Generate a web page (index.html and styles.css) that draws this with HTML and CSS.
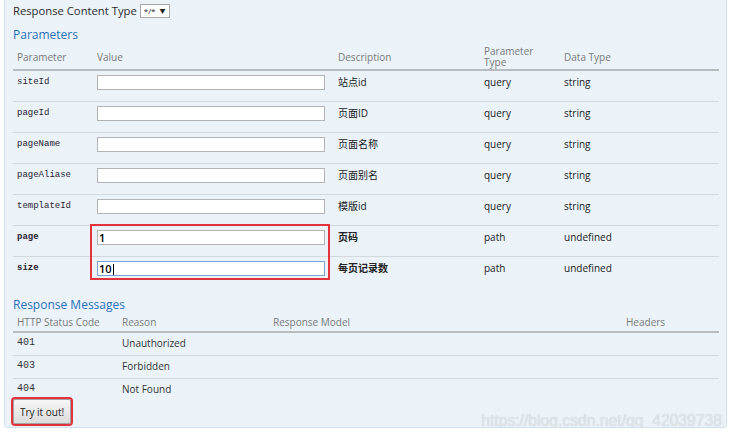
FILE: index.html
```html
<!DOCTYPE html>
<html lang="en">
<head>
<meta charset="utf-8">
<title>Operation</title>
<link rel="stylesheet" href="styles.css">
</head>
<body>
<div class="panel">
  <div class="content-type">
    <span>Response Content Type</span>
    <span class="select"><span class="select-val">*/*</span><span class="select-arrow">&#9660;</span></span>
  </div>

  <h4 class="heading params-heading">Parameters</h4>
  <table class="params">
    <colgroup>
      <col class="c1"><col class="c2"><col class="c3"><col class="c4"><col class="c5">
    </colgroup>
    <thead>
      <tr>
        <th>Parameter</th>
        <th>Value</th>
        <th>Description</th>
        <th>Parameter<br>Type</th>
        <th>Data Type</th>
      </tr>
    </thead>
    <tbody>
      <tr>
        <td class="code">siteId</td>
        <td><input class="field" type="text"></td>
        <td class="desc">站点id</td>
        <td>query</td>
        <td>string</td>
      </tr>
      <tr>
        <td class="code">pageId</td>
        <td><input class="field" type="text"></td>
        <td class="desc">页面ID</td>
        <td>query</td>
        <td>string</td>
      </tr>
      <tr>
        <td class="code">pageName</td>
        <td><input class="field" type="text"></td>
        <td class="desc">页面名称</td>
        <td>query</td>
        <td>string</td>
      </tr>
      <tr>
        <td class="code">pageAliase</td>
        <td><input class="field" type="text"></td>
        <td class="desc">页面别名</td>
        <td>query</td>
        <td>string</td>
      </tr>
      <tr>
        <td class="code">templateId</td>
        <td><input class="field" type="text"></td>
        <td class="desc">模版id</td>
        <td>query</td>
        <td>string</td>
      </tr>
      <tr class="required">
        <td class="code">page</td>
        <td><input class="field filled" type="text" value="1"></td>
        <td class="desc">页码</td>
        <td>path</td>
        <td>undefined</td>
      </tr>
      <tr class="required last">
        <td class="code">size</td>
        <td><div class="field filled focused">10<span class="caret"></span></div></td>
        <td class="desc">每页记录数</td>
        <td>path</td>
        <td>undefined</td>
      </tr>
    </tbody>
  </table>

  <h4 class="heading resp-heading">Response Messages</h4>
  <table class="responses">
    <colgroup>
      <col class="r1"><col class="r2"><col class="r3"><col class="r4">
    </colgroup>
    <thead>
      <tr>
        <th>HTTP Status Code</th>
        <th>Reason</th>
        <th>Response Model</th>
        <th>Headers</th>
      </tr>
    </thead>
    <tbody>
      <tr><td class="code">401</td><td>Unauthorized</td><td></td><td></td></tr>
      <tr><td class="code">403</td><td>Forbidden</td><td></td><td></td></tr>
      <tr class="last"><td class="code">404</td><td>Not Found</td><td></td><td></td></tr>
    </tbody>
  </table>

  <button class="try-btn" type="button">Try it out!</button>

  <div class="highlight"></div>
  <div class="watermark">https://blog.csdn.net/qq_42039738</div>
</div>
</body>
</html>
```

FILE: styles.css
```css
html, body {
  margin: 0;
  padding: 0;
  background: #ffffff;
}

body {
  font-family: "Open Sans", "Noto Sans CJK SC", sans-serif;
  color: #333333;
}

.panel {
  position: relative;
  margin-left: 4px;
  width: 723px;
  height: 428px;
  box-sizing: border-box;
  background: #ebf3f9;
  border: 1px solid #d2e1ee;
  border-top: none;
  border-radius: 0 0 4px 4px;
  padding: 4px 7px 0 8px;
}

.content-type {
  display: flex;
  align-items: center;
  gap: 3px;
  height: 14px;
  font-size: 11.25px;
  line-height: 14px;
  color: #2b2b2b;
}

.select {
  display: flex;
  align-items: center;
  gap: 4px;
  height: 14px;
  box-sizing: border-box;
  padding: 0 4px 0 3px;
  background: #ffffff;
  border: 1px solid #a8a8a8;
  font-size: 8px;
  line-height: 12px;
  color: #222;
}

.select-arrow {
  font-size: 6px;
}

.heading {
  margin: 0;
  font-size: 12px;
  line-height: 14px;
  font-weight: normal;
  color: #2a70bb;
}

.params-heading {
  margin-top: 10px;
}

table {
  width: 706px;
  border-collapse: collapse;
  table-layout: fixed;
  margin-top: 2px;
}

th {
  text-align: left;
  font-weight: normal;
  color: #7a7a7a;
  font-size: 10px;
  padding: 2px 4px 1px;
  line-height: 11px;
  vertical-align: middle;
  border-bottom: 2px solid #b9bcbf;
}

col.c1 { width: 80px; }
col.c2 { width: 241px; }
col.c3 { width: 146px; }
col.c4 { width: 80px; }
col.c5 { width: 159px; }

.params td {
  padding: 4px 4px 11px;
  vertical-align: top;
  font-size: 10px;
  line-height: 15px;
  color: #222;
  border-bottom: 1px solid #d3d8dc;
}

.params tr.last td {
  border-bottom: none;
}

td.code {
  font-family: "Liberation Mono", "DejaVu Sans Mono", monospace;
  font-size: 9px;
  color: #2a2230;
}

.required td.code {
  font-weight: bold;
}

.desc {
  font-family: "Open Sans", "Noto Sans CJK SC", sans-serif;
  color: #333;
}

.required .desc {
  font-weight: 600;
}

.field {
  display: block;
  width: 228px;
  height: 15px;
  box-sizing: border-box;
  margin: 0;
  padding: 0 1px;
  background: #ffffff;
  border: 1px solid #b3b3b3;
  font-family: "Open Sans", sans-serif;
  font-size: 11px;
  line-height: 13px;
  color: #000;
  outline: none;
}

.field.filled {
  font-weight: 600;
}

.field.focused {
  border-color: #78a3d8;
}

.caret {
  display: inline-block;
  width: 1px;
  height: 11px;
  background: #000;
  vertical-align: -2px;
  margin-left: 1px;
}

.resp-heading {
  margin-top: 11px;
}

.responses {
  margin-top: 1px;
}

col.r1 { width: 105px; }
col.r2 { width: 151px; }
col.r3 { width: 353px; }
col.r4 { width: 97px; }

.responses th {
  padding: 3px 4px 3px;
  line-height: 12px;
}

.responses td {
  padding: 4px 4px 6px;
  font-size: 10px;
  line-height: 12px;
  color: #333;
  border-bottom: 1px solid #d3d8dc;
  vertical-align: top;
}

.responses tr.last td {
  border-bottom: none;
  padding-bottom: 3px;
}

.try-btn {
  display: block;
  margin-top: 1px;
  width: 58px;
  height: 25px;
  padding: 0;
  background: linear-gradient(#f6f6f6, #dcdcdc);
  border: 1px solid #a3a3a3;
  border-radius: 2px;
  font-family: "Open Sans", sans-serif;
  font-size: 10px;
  color: #222;
  outline: 2px solid #e2323c;
  outline-offset: 0;
}

.highlight {
  position: absolute;
  left: 85px;
  top: 224px;
  width: 240px;
  height: 56px;
  box-sizing: border-box;
  border: 2px solid #e2323c;
  pointer-events: none;
}

.watermark {
  position: absolute;
  right: 4px;
  top: 412px;
  font-family: "Liberation Sans", sans-serif;
  font-size: 15.7px;
  line-height: 18px;
  color: #dfe4e9;
  text-shadow: 0 0 1px #c9cfd5;
  pointer-events: none;
}
```
